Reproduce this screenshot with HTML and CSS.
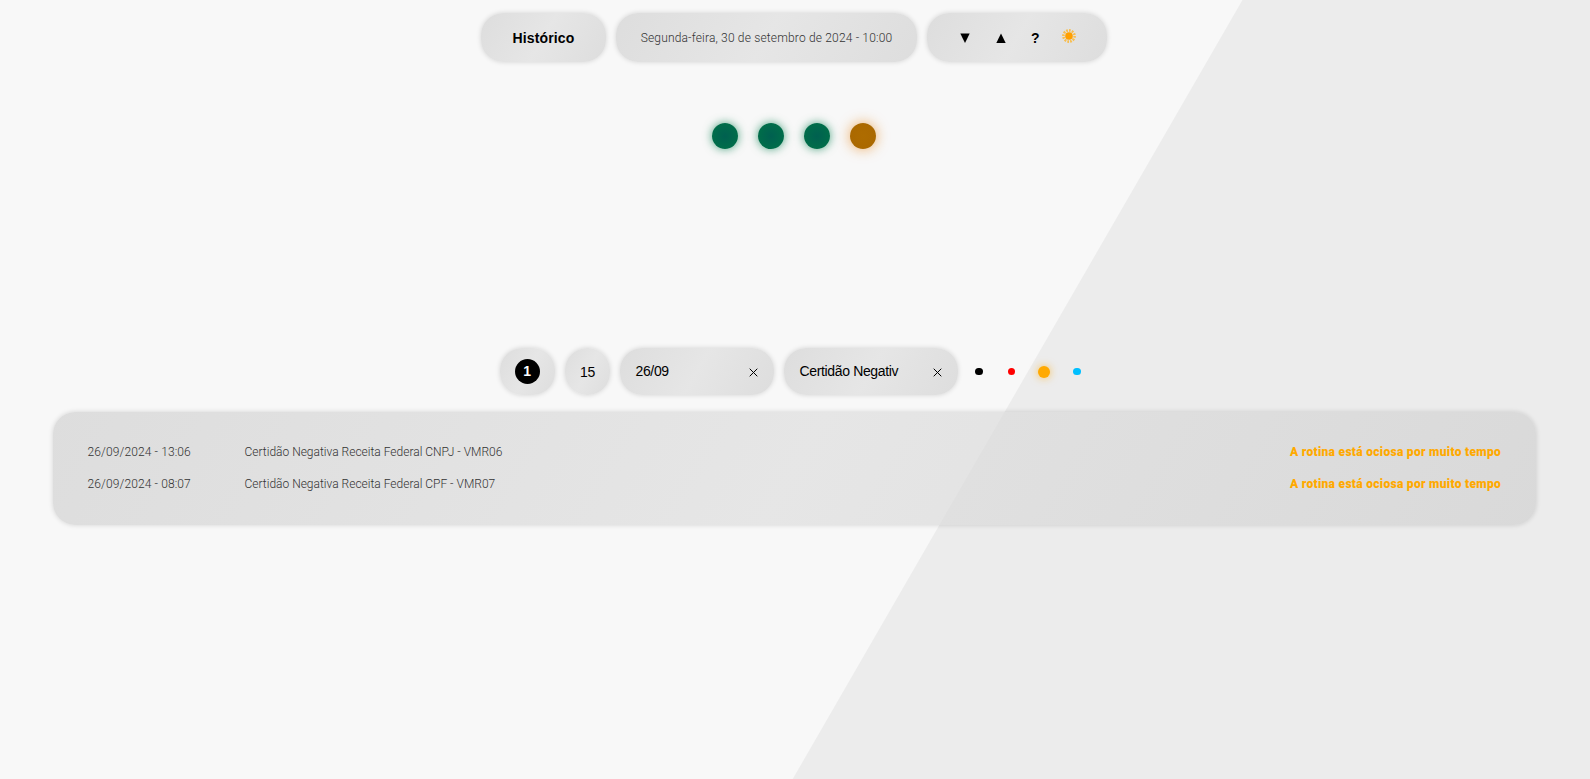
FILE: index.html
```html
<!DOCTYPE html>
<html lang="pt-BR">
<head>
<meta charset="utf-8">
<title>Histórico</title>
<link rel="stylesheet" href="styles.css">
</head>
<body>
<header class="topbar">
  <div class="pill title"><span>Histórico</span></div>
  <div class="pill date"><span>Segunda-feira, 30 de setembro de 2024 - 10:00</span></div>
  <nav class="pill actions">
    <svg class="tri" viewBox="0 0 10 10"><path d="M.3 .5H9.7L5 10Z"/></svg>
    <svg class="tri" viewBox="0 0 10 10"><path d="M5 .5L9.7 10H.3Z"/></svg>
    <span class="help">?</span>
    <svg class="sun" viewBox="0 0 14 14"><circle class="rays" cx="7" cy="7" r="5.6" pathLength="24"/><circle class="core" cx="7" cy="7" r="3.8"/></svg>
  </nav>
</header>
<section class="status">
  <i class="lamp"></i><i class="lamp"></i><i class="lamp"></i><i class="lamp warn"></i>
</section>
<section class="filters">
  <div class="pill page"><b>1</b></div>
  <div class="pill count"><span>15</span></div>
  <div class="pill field day"><span>26/09</span><svg class="clear" viewBox="0 0 9 9"><path d="M.7.7L8.3 8.3M8.3.7L.7 8.3"/></svg></div>
  <div class="pill field name"><span>Certidão Negativ</span><svg class="clear" viewBox="0 0 9 9"><path d="M.7.7L8.3 8.3M8.3.7L.7 8.3"/></svg></div>
  <div class="dots"><i class="dot"></i><i class="dot red"></i><i class="dot amber"></i><i class="dot blue"></i></div>
</section>
<main class="panel">
  <div class="row"><span class="when">26/09/2024 - 13:06</span><span class="what">Certidão Negativa Receita Federal CNPJ - VMR06</span><strong>A rotina está ociosa por muito tempo</strong></div>
  <div class="row"><span class="when">26/09/2024 - 08:07</span><span class="what">Certidão Negativa Receita Federal CPF - VMR07</span><strong>A rotina está ociosa por muito tempo</strong></div>
</main>
</body>
</html>
```
FILE: styles.css
```css
* { box-sizing: border-box; }
body {
  margin: 0;
  height: 779px;
  overflow: hidden;
  background: linear-gradient(120deg, #f8f8f8 1075.5px, #ececec 1076.5px);
  font: 300 12px/16px Roboto, sans-serif;
  color: #333;
}
.pill, .panel {
  background: linear-gradient(120deg, rgba(208,208,208,.67), rgba(221,221,221,.67) 50%, rgba(208,208,208,.67));
  box-shadow: 0 0 5px rgba(0,0,0,.15);
  border-radius: 22px;
}
.pill {
  display: flex;
  align-items: center;
  justify-content: center;
  white-space: nowrap;
}
.topbar {
  display: flex;
  gap: 10px;
  padding: 13px 0 0 481px;
}
.topbar .pill { height: 49px; }
.title { width: 125px; font: 700 14px/16px "Liberation Sans", sans-serif; color: #000; letter-spacing: .15px; }
.date { width: 301px; letter-spacing: .17px; }
.topbar .actions { width: 180px; padding-left: 33px; justify-content: flex-start; color: #000; }
.tri { width: 10px; height: 10px; margin: 1px 26px 0 0; }
.help { width: 9px; font: 700 14px/16px "Liberation Sans", sans-serif; margin-left: -1px; }
.sun { width: 14px; height: 14px; margin: -3px 0 0 22px; }
.rays { fill: none; stroke: #f8bd4c; stroke-width: 2.6; stroke-dasharray: 1.2 .8; }
.core { fill: #ffa000; }
.status {
  display: flex;
  gap: 20px;
  padding: 61px 0 0 712px;
}
.lamp {
  width: 26px;
  height: 26px;
  border-radius: 50%;
  background: radial-gradient(circle, #006050, #007048 85%);
  box-shadow: 0 0 10px rgba(0,125,75,.7);
}
.warn {
  background: radial-gradient(circle, #ae6c00, #aa6800 85%);
  box-shadow: 0 0 13px rgba(230,130,20,.65);
}
.filters {
  display: flex;
  gap: 10px;
  align-items: center;
  padding: 199px 0 0 499.5px;
  font: 400 14px/16px "Liberation Sans", sans-serif;
  letter-spacing: -.35px;
  color: #000;
}
.filters .pill { height: 47px; }
.page { width: 55px; }
.page b {
  width: 25px;
  height: 25px;
  border-radius: 50%;
  background: #000;
  color: #fff;
  text-align: center;
  line-height: 25px;
}
.count { width: 45px; padding-left: 1px; }
.field { justify-content: space-between; padding: 0 15.5px 1px 16px; }
.day { width: 154px; }
.name { width: 174px; }
.clear { width: 9px; height: 9px; fill: none; stroke: #000; stroke-width: 1; margin-top: 2px; }
.dots { display: flex; align-items: center; padding-left: 7.5px; gap: 25px; }
.dot { width: 7.5px; height: 7.5px; border-radius: 50%; background: #000; }
.red { background: #f00; }
.amber { width: 12px; height: 12px; background: #ffa900; box-shadow: 0 0 8px rgba(255,169,0,.65); margin: 0 -2px; }
.blue { background: #00bfff; }
.panel {
  margin: 17px 54.5px 0 53px;
  height: 113px;
  padding: 24px 34.5px 0 34.5px;
}
.row { display: flex; align-items: center; height: 32px; }
.when { width: 157px; letter-spacing: .12px; }
.row strong { margin-left: auto; font-weight: 900; color: #ffa900; letter-spacing: .3px; }
```
